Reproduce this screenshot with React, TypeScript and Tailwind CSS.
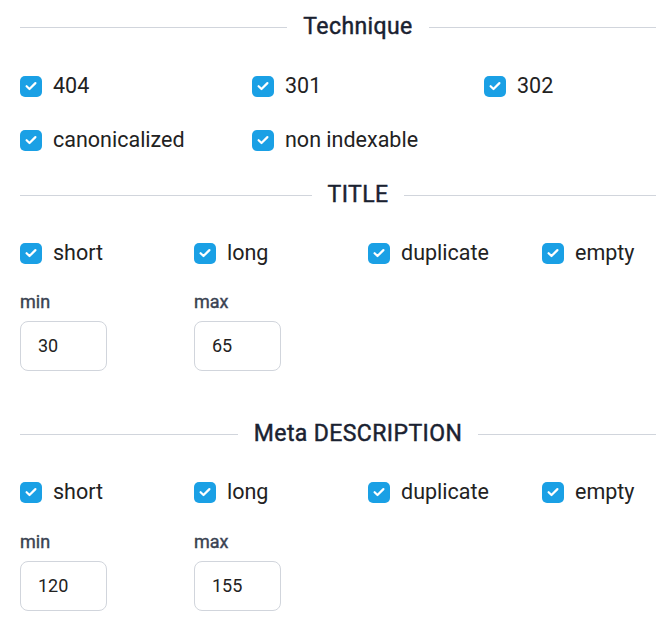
import React from "react";

const Heading = (props: { title: string; className?: string }) => {
  return (
    <div className={`flex items-center gap-4 ${props.className ?? ""}`}>
      <div className="h-px flex-1 bg-gray-300" />
      <h2 className="text-[23px] font-normal leading-7 tracking-[0.4px] text-[#1a2231] [-webkit-text-stroke:0.45px_#1a2231]">
        {props.title}
      </h2>
      <div className="h-px flex-1 bg-gray-300" />
    </div>
  );
};

const Check = (props: { label: string }) => {
  return (
    <label className="flex items-center gap-[11px]">
      <span className="flex h-[21px] w-[22px] items-center justify-center rounded-[5px] bg-[#1aa0e5]">
        <svg width="12" height="10" viewBox="0 0 12 10" fill="none">
          <path
            d="M1.6 5.2 4.5 8 10.4 2.1"
            stroke="white"
            strokeWidth="2.2"
            strokeLinecap="round"
            strokeLinejoin="round"
          />
        </svg>
      </span>
      <span className="text-[21.5px] leading-7 text-[#222]">{props.label}</span>
    </label>
  );
};

const NumField = (props: { label: string; value: string }) => {
  return (
    <div className="flex flex-col gap-[7px]">
      <span className="text-[18px] font-normal leading-6 text-[#3a4352] [-webkit-text-stroke:0.4px_#3a4352]">
        {props.label}
      </span>
      <div className="flex h-[50px] w-[87px] items-center rounded-lg border border-gray-300 px-[17px] text-lg text-[#222]">
        {props.value}
      </div>
    </div>
  );
};

const MinMax = (props: { min: string; max: string }) => {
  return (
    <div className="grid grid-cols-4 gap-5">
      <NumField label="min" value={props.min} />
      <NumField label="max" value={props.max} />
    </div>
  );
};

export default function App() {
  let four = ["short", "long", "duplicate", "empty"];
  return (
    <div
      className="h-[620px] w-[656px] overflow-hidden bg-white"
      style={{ fontFamily: "Roboto, 'Liberation Sans', sans-serif" }}
    >
      <div className="w-[696px] pl-5 pt-[13px]">
        <Heading title="Technique" />
        <div className="mt-[31px] grid grid-cols-3 gap-x-5 gap-y-[26px]">
          <Check label="404" />
          <Check label="301" />
          <Check label="302" />
          <Check label="canonicalized" />
          <Check label="non indexable" />
        </div>

        <Heading title="TITLE" className="mt-[27px]" />
        <div className="mt-[30px] grid grid-cols-4 gap-5">
          {four.map((a) => (
            <Check label={a} key={a} />
          ))}
        </div>
        <div className="mt-[23px]">
          <MinMax min="30" max="65" />
        </div>

        <Heading title="Meta DESCRIPTION" className="mt-[49px]" />
        <div className="mt-[30px] grid grid-cols-4 gap-5">
          {four.map((a) => (
            <Check label={a} key={a} />
          ))}
        </div>
        <div className="mt-6">
          <MinMax min="120" max="155" />
        </div>
      </div>
    </div>
  );
}
